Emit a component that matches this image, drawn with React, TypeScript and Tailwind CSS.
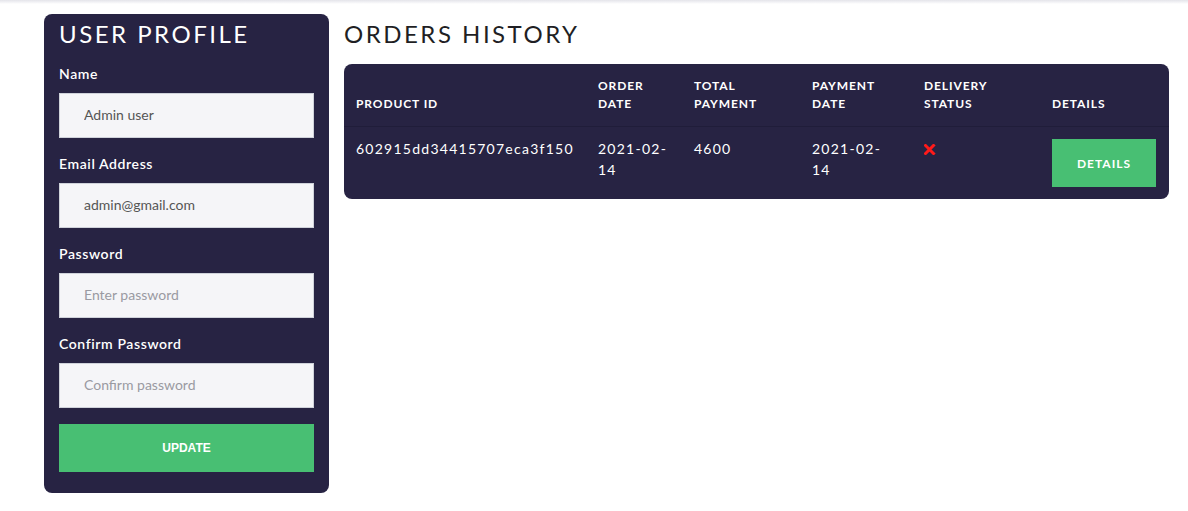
import React from "react";

const fields = [
  { label: "Name", value: "Admin user", placeholder: "Enter name", type: "text" },
  { label: "Email Address", value: "admin@gmail.com", placeholder: "Enter email", type: "email" },
  { label: "Password", value: "", placeholder: "Enter password", type: "password" },
  { label: "Confirm Password", value: "", placeholder: "Confirm password", type: "password" },
];

const orders = [
  {
    id: "602915dd34415707eca3f150",
    orderDate: "2021-02-14",
    total: "4600",
    paidAt: "2021-02-14",
    delivered: false,
  },
];

function Cross() {
  return (
    <svg width="12" height="11" viewBox="0 0 12 11" className="inline-block -mt-[2px]">
      <path d="M1.5 1.5 L9.5 9.5 M9.5 1.5 L1.5 9.5" stroke="#ff1a1a" strokeWidth="3" strokeLinecap="square" />
    </svg>
  );
}

export default function App() {
  return (
    <div className="min-h-[511px] bg-white font-['Lato',sans-serif]">
      {/* top header shadow */}
      <div className="h-[4px] bg-gradient-to-b from-[#e4e4ea] to-white" />

      <div className="flex items-start gap-[15px] pl-[44px] pr-[19px] pt-[10px]">
        {/* Profile card */}
        <div className="w-[285px] shrink-0 rounded-lg bg-[#272343] px-[15px] pt-[5px] pb-[21px]">
          <h2 className="text-[24px] leading-[29px] tracking-[2.5px] text-white font-normal mb-[16px]">
            USER PROFILE
          </h2>
          <form className="flex flex-col" onSubmit={(e) => e.preventDefault()}>
            {fields.map((f, i) => (
              <div key={f.label} className={i > 0 ? "mt-[16px]" : ""}>
                <label className="block text-[14px] leading-[20px] font-semibold tracking-[0.6px] text-white mb-[9px]">
                  {f.label}
                </label>
                <input
                  type={f.type}
                  defaultValue={f.value}
                  placeholder={f.placeholder}
                  className="block w-full h-[45px] bg-[#f5f5f8] border border-[#cfd2da] px-[24px] pb-[2px] text-[14px] text-[#555] placeholder:text-[#9a9aa2] outline-none font-['Lato',sans-serif]"
                />
              </div>
            ))}
            <button
              type="submit"
              className="mt-[16px] h-[48px] w-full bg-[#48bf73] text-white text-[12px] font-semibold font-['Liberation_Sans',Arial,sans-serif]"
            >
              UPDATE
            </button>
          </form>
        </div>

        {/* Orders */}
        <div className="flex-1 pt-[5px]">
          <h2 className="text-[24px] leading-[29px] tracking-[2.5px] text-[#1f1f24] font-normal mb-[16px]">
            ORDERS HISTORY
          </h2>
          <div className="rounded-lg overflow-hidden bg-[#272343]">
            <table className="w-full table-fixed border-collapse text-white">
              <colgroup>
                <col className="w-[242px]" />
                <col className="w-[96px]" />
                <col className="w-[118px]" />
                <col className="w-[112px]" />
                <col className="w-[128px]" />
                <col className="w-[129px]" />
              </colgroup>
              <thead>
                <tr className="border-b border-[#201d3a]">
                  {["PRODUCT ID", "ORDER DATE", "TOTAL PAYMENT", "PAYMENT DATE", "DELIVERY STATUS", "DETAILS"].map((h) => (
                    <th
                      key={h}
                      className="px-3 py-[13px] text-left align-bottom text-[12px] leading-[18px] font-bold tracking-[0.9px]"
                    >
                      {h}
                    </th>
                  ))}
                </tr>
              </thead>
              <tbody>
                {orders.map((o) => (
                  <tr key={o.id} className="text-[14px] leading-[21px] tracking-[1.25px]">
                    <td className="px-3 pt-[11px] pb-3 align-top">{o.id}</td>
                    <td className="px-3 pt-[11px] pb-3 align-top">
                      {o.orderDate.slice(0, 8)}
                      <br />
                      {o.orderDate.slice(8)}
                    </td>
                    <td className="px-3 pt-[11px] pb-3 align-top">{o.total}</td>
                    <td className="px-3 pt-[11px] pb-3 align-top">
                      {o.paidAt.slice(0, 8)}
                      <br />
                      {o.paidAt.slice(8)}
                    </td>
                    <td className="px-3 pt-[11px] pb-3 align-top">{o.delivered ? "✓" : <Cross />}</td>
                    <td className="px-3 py-3 align-top">
                      <button className="h-[48px] w-[104px] bg-[#48bf73] text-white text-[12px] font-bold tracking-[1px]">
                        DETAILS
                      </button>
                    </td>
                  </tr>
                ))}
              </tbody>
            </table>
          </div>
        </div>
      </div>
    </div>
  );
}
